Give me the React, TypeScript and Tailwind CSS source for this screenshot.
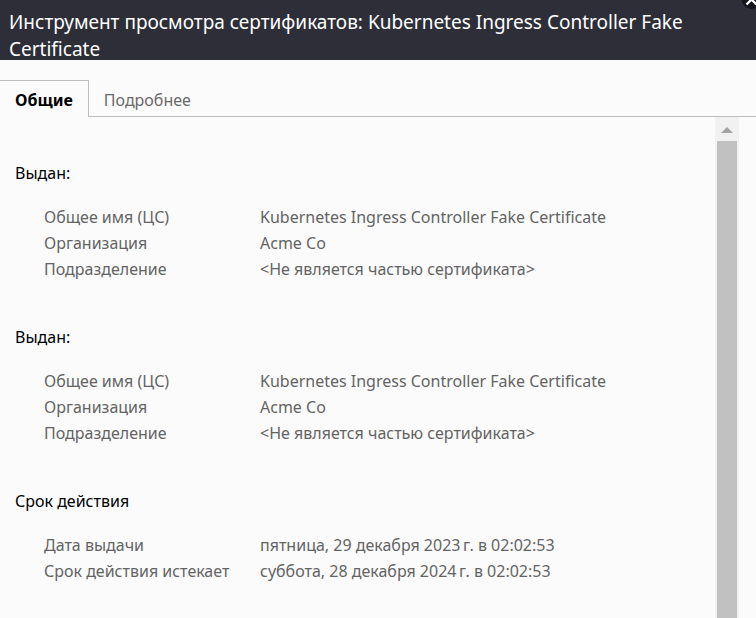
import React from "react";

type Row = { label: string; value: string };
type Section = { id: string; title: string; rows: Row[] };

const identity: Row[] = [
  { label: "Общее имя (ЦС)", value: "Kubernetes Ingress Controller Fake Certificate" },
  { label: "Организация", value: "Acme Co" },
  { label: "Подразделение", value: "<Не является частью сертификата>" },
];

const sections: Section[] = [
  { id: "subject", title: "Выдан:", rows: identity },
  { id: "issuer", title: "Выдан:", rows: identity },
  {
    id: "validity",
    title: "Срок действия",
    rows: [
      { label: "Дата выдачи", value: "пятница, 29 декабря 2023\u202fг. в 02:02:53" },
      { label: "Срок действия истекает", value: "суббота, 28 декабря 2024\u202fг. в 02:02:53" },
    ],
  },
];

function Header() {
  return (
    <header className="relative h-15 shrink-0 bg-[#2e2e38] pt-[9px] pr-16 pl-[9px] text-white">
      <h1 className="text-[19px] leading-[27px]">
        Инструмент просмотра сертификатов: Kubernetes Ingress Controller Fake Certificate
      </h1>
      <button aria-label="Закрыть" className="absolute top-0 right-0 h-[10px] w-[15px]">
        <svg viewBox="0 0 15 10" className="block h-full w-full">
          <circle cx="10.5" cy="-1" r="10" fill="#15151b" />
          <path d="M5.5 4.5 L10.5 -0.5 L15.5 4.5" fill="none" stroke="#fff" strokeWidth="2.4" />
        </svg>
      </button>
    </header>
  );
}

function Tabs() {
  return (
    <div role="tablist" className="mt-5 flex h-[37px] shrink-0 text-base">
      <button
        role="tab"
        aria-selected="true"
        className="border-t border-r border-[#bdbdbd] px-[15px] pt-[2px] font-bold text-black"
      >
        Общие
      </button>
      <button
        role="tab"
        aria-selected="false"
        className="grow border-b border-[#bdbdbd] pt-1 pl-[15px] text-left text-[#6a6a6a]"
      >
        Подробнее
      </button>
    </div>
  );
}

function Scrollbar() {
  return (
    <div className="mr-[17px] flex w-6 shrink-0 flex-col bg-[#f1f1f1]">
      <button aria-label="Прокрутить вверх" className="flex h-6 shrink-0 items-center justify-center pt-[2px]">
        <svg viewBox="0 0 12 6" className="h-[6px] w-3">
          <path d="M6 0 L12 6 H0 Z" fill="#a3a3a3" />
        </svg>
      </button>
      <div className="mx-[2px] grow bg-[#c1c1c1]" />
    </div>
  );
}

export default function App() {
  return (
    <div className="flex h-screen flex-col overflow-hidden bg-[#fbfbfb] font-['Noto_Sans','Open_Sans',sans-serif]">
      <Header />
      <Tabs />
      <div className="flex min-h-0 grow">
        <main className="min-w-0 grow overflow-hidden pt-[43px] pl-[15px] text-base leading-[26px]">
          {sections.map((s) => (
            <section key={s.id} className="mb-[42px]">
              <h2 className="mb-[18px] text-black">{s.title}</h2>
              <dl className="pl-[29px] text-[#646464]">
                {s.rows.map((r) => (
                  <div key={r.label} className="flex">
                    <dt className="w-[216px] shrink-0">{r.label}</dt>
                    <dd>{r.value}</dd>
                  </div>
                ))}
              </dl>
            </section>
          ))}
        </main>
        <Scrollbar />
      </div>
    </div>
  );
}
